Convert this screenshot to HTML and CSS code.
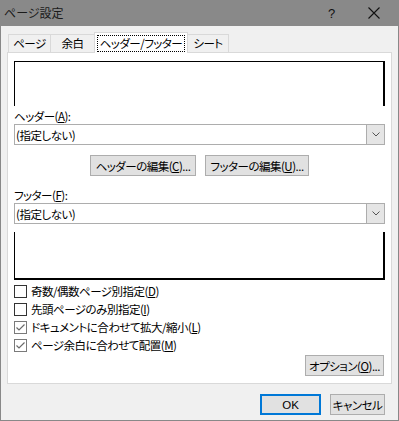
FILE: index.html
```html
<!DOCTYPE html>
<html lang="ja">
<head>
<meta charset="utf-8">
<title>ページ設定</title>
<link rel="stylesheet" href="styles.css">
</head>
<body>
<div class="window">
  <div class="titlebar">
    <span class="title">ページ設定</span>
    <span class="help">?</span>
    <span class="close"><svg width="12" height="12" viewBox="0 0 12 12"><path d="M0.5 0.5 L11.5 11.5 M11.5 0.5 L0.5 11.5" stroke="#111" stroke-width="1.1" fill="none"/></svg></span>
  </div>
  <div class="tabs">
    <div class="tab t1">ページ</div>
    <div class="tab t2">余白</div>
    <div class="tab active t3"><span class="focus">ヘッダー/フッター</span></div>
    <div class="tab t4">シート</div>
  </div>
  <div class="panel">
    <div class="preview head"></div>
    <div class="label l1">ヘッダー(<u>A</u>):</div>
    <div class="combo">
      <span class="val">(指定しない)</span>
      <span class="drop"><svg width="8" height="5" viewBox="0 0 8 5"><path d="M0.5 0.5 L4 4 L7.5 0.5" stroke="#555" stroke-width="1" fill="none"/></svg></span>
    </div>
    <div class="btnrow">
      <div class="btn b1">ヘッダーの編集(<u>C</u>)...</div>
      <div class="btn b2">フッターの編集(<u>U</u>)...</div>
    </div>
    <div class="label l2">フッター(<u>F</u>):</div>
    <div class="combo">
      <span class="val">(指定しない)</span>
      <span class="drop"><svg width="8" height="5" viewBox="0 0 8 5"><path d="M0.5 0.5 L4 4 L7.5 0.5" stroke="#555" stroke-width="1" fill="none"/></svg></span>
    </div>
    <div class="preview foot"></div>
    <div class="checks">
      <div class="chk"><span class="box"></span>奇数/偶数ページ別指定(<u>D</u>)</div>
      <div class="chk"><span class="box"></span>先頭ページのみ別指定(<u>I</u>)</div>
      <div class="chk"><span class="box checked"><svg width="11" height="11" viewBox="0 0 11 11"><path d="M1.5 5.5 L4 8 L9.5 2.5" stroke="#6a6a6a" stroke-width="1.2" fill="none"/></svg></span>ドキュメントに合わせて拡大/縮小(<u>L</u>)</div>
      <div class="chk"><span class="box checked"><svg width="11" height="11" viewBox="0 0 11 11"><path d="M1.5 5.5 L4 8 L9.5 2.5" stroke="#6a6a6a" stroke-width="1.2" fill="none"/></svg></span>ページ余白に合わせて配置(<u>M</u>)</div>
    </div>
    <div class="optrow"><div class="btn opt">オプション(<u>O</u>)...</div></div>
  </div>
  <div class="footer">
    <div class="btn ok">OK</div>
    <div class="btn cancel">キャンセル</div>
  </div>
</div>
</body>
</html>
```

FILE: styles.css
```css
html, body {
  margin: 0;
  padding: 0;
}
body {
  font-family: "Noto Sans CJK JP", "Noto Sans", sans-serif;
  font-size: 11.5px;
  letter-spacing: -0.5px;
  font-feature-settings: "palt";
  color: #000;
}
u {
  text-decoration: underline;
  text-underline-offset: 1px;
}
.window {
  width: 399px;
  height: 421px;
  box-sizing: border-box;
  border: 1px solid #888;
  border-top: none;
  background: #f0f0f0;
  display: flex;
  flex-direction: column;
}
.titlebar {
  height: 26px;
  flex: none;
  margin: 0 -1px;
  background: #898989;
  display: flex;
  align-items: center;
}
.title {
  padding-left: 4px;
  color: #1a1a1a;
  font-size: 12px;
  letter-spacing: 0;
  line-height: 14px;
}
.help {
  margin-left: auto;
  font-family: "Liberation Sans", sans-serif;
  font-size: 13px;
  letter-spacing: 0;
  color: #111;
  width: 8px;
}
.close {
  margin-left: 32px;
  margin-right: 19px;
  display: flex;
}
.tabs {
  height: 26px;
  flex: none;
  display: flex;
  align-items: flex-end;
  padding-left: 7px;
}
.tab {
  box-sizing: border-box;
  height: 18px;
  border: 1px solid #d9d9d9;
  border-bottom: none;
  background: #f0f0f0;
  text-align: center;
  line-height: 16px;
  white-space: nowrap;
}
.t1 { width: 43px; }
.t2 { width: 45px; margin-left: -1px; }
.t3 { width: 94px; margin-left: -1px; }
.t4 { width: 42px; margin-left: -1px; }
.tab.active {
  height: 21px;
  margin-bottom: -1px;
  background: #fff;
  position: relative;
  z-index: 1;
  display: flex;
  align-items: flex-start;
  justify-content: center;
  padding-top: 2px;
}
.focus {
  display: block;
  box-sizing: border-box;
  height: 17px;
  line-height: 15px;
  padding: 0 2px;
  border: 1px dotted #000;
  white-space: nowrap;
}
.panel {
  width: 385px;
  height: 332px;
  margin-left: 6px;
  flex: none;
  box-sizing: border-box;
  border: 1px solid #d9d9d9;
  background: #fff;
  padding: 8px 6px 0 6px;
  display: flex;
  flex-direction: column;
}
.preview {
  box-sizing: border-box;
  flex: none;
}
.preview.head {
  height: 45px;
  border-top: 1px solid #000;
  border-left: 1px solid #000;
  border-right: 2px solid #000;
}
.preview.foot {
  height: 48px;
  margin-top: 8px;
  border-left: 1px solid #000;
  border-bottom: 2px solid #000;
  border-right: 2px solid #000;
}
.label {
  display: flex;
  align-items: flex-end;
  line-height: 14px;
  padding-bottom: 1px;
  box-sizing: border-box;
  flex: none;
}
.l1 { height: 18px; }
.l2 { height: 27px; }
.combo {
  height: 21px;
  flex: none;
  box-sizing: border-box;
  border: 1px solid #adadad;
  display: flex;
  align-items: center;
}
.val {
  flex: 1;
  padding-left: 1px;
  line-height: 14px;
}
.drop {
  width: 18px;
  height: 19px;
  box-sizing: border-box;
  background: #e5e5e5;
  border-left: 1px solid #adadad;
  display: flex;
  align-items: center;
  justify-content: center;
}
.btn {
  box-sizing: border-box;
  height: 21px;
  border: 1px solid #adadad;
  background: #e1e1e1;
  display: flex;
  align-items: center;
  justify-content: center;
  line-height: 14px;
  white-space: nowrap;
}
.btnrow {
  display: flex;
  margin-top: 10px;
  padding-left: 76px;
  gap: 9px;
  flex: none;
}
.b1 { width: 106px; }
.b2 { width: 104px; }
.checks {
  margin-top: 2px;
  display: flex;
  flex-direction: column;
  flex: none;
}
.chk {
  height: 18px;
  display: flex;
  align-items: center;
  line-height: 14px;
  white-space: nowrap;
}
.box {
  width: 13px;
  height: 13px;
  box-sizing: border-box;
  border: 1px solid #333;
  background: #fff;
  margin-right: 4px;
  flex: none;
  display: flex;
  align-items: center;
  justify-content: center;
}
.box.checked {
  border-color: #7a7a7a;
}
.optrow {
  display: flex;
  justify-content: flex-end;
  margin-top: 1px;
  padding-right: 1px;
  flex: none;
}
.opt { width: 79px; }
.footer {
  display: flex;
  justify-content: flex-end;
  padding-top: 10px;
  padding-right: 13px;
  gap: 9px;
}
.ok {
  width: 61px;
  border: 2px solid #0078d7;
  font-family: "Liberation Sans", "Noto Sans CJK JP", sans-serif;
  letter-spacing: 0;
}
.cancel { width: 55px; }
```
